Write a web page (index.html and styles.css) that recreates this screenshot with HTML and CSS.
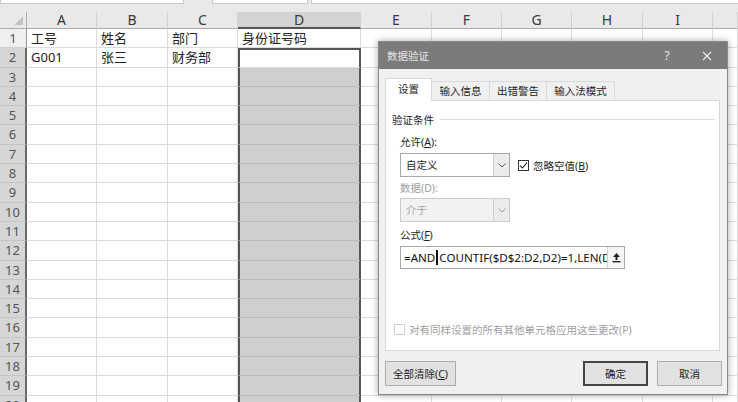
FILE: index.html
```html
<!DOCTYPE html>
<html lang="zh-CN">
<head>
  <meta charset="UTF-8" />
  <title>数据验证</title>
  <link rel="stylesheet" href="styles.css">
</head>
<body>
  <!-- 编辑栏 (只露出底边) -->
  <div class="topbar">
    <div class="box namebox"></div>
    <div class="box fxbtns"></div>
    <div class="box fxbar"></div>
  </div>

  <!-- 工作表 -->
  <div class="sheet">
    <div class="row colhead">
      <div class="corner"></div>
      <div>A</div><div>B</div><div>C</div><div class="sel">D</div><div>E</div><div>F</div><div>G</div><div>H</div><div>I</div><div></div>
    </div>
    <div class="row"><div class="rh">1</div><div>工号</div><div>姓名</div><div>部门</div><div>身份证号码</div><div></div><div></div><div></div><div></div><div></div><div></div></div>
    <div class="row"><div class="rh sel">2</div><div>G001</div><div>张三</div><div>财务部</div><div class="d act"></div><div></div><div></div><div></div><div></div><div></div><div></div></div>
    <div class="row"><div class="rh sel">3</div><div></div><div></div><div></div><div class="d"></div><div></div><div></div><div></div><div></div><div></div><div></div></div>
    <div class="row"><div class="rh sel">4</div><div></div><div></div><div></div><div class="d"></div><div></div><div></div><div></div><div></div><div></div><div></div></div>
    <div class="row"><div class="rh sel">5</div><div></div><div></div><div></div><div class="d"></div><div></div><div></div><div></div><div></div><div></div><div></div></div>
    <div class="row"><div class="rh sel">6</div><div></div><div></div><div></div><div class="d"></div><div></div><div></div><div></div><div></div><div></div><div></div></div>
    <div class="row"><div class="rh sel">7</div><div></div><div></div><div></div><div class="d"></div><div></div><div></div><div></div><div></div><div></div><div></div></div>
    <div class="row"><div class="rh sel">8</div><div></div><div></div><div></div><div class="d"></div><div></div><div></div><div></div><div></div><div></div><div></div></div>
    <div class="row"><div class="rh sel">9</div><div></div><div></div><div></div><div class="d"></div><div></div><div></div><div></div><div></div><div></div><div></div></div>
    <div class="row"><div class="rh sel">10</div><div></div><div></div><div></div><div class="d"></div><div></div><div></div><div></div><div></div><div></div><div></div></div>
    <div class="row"><div class="rh sel">11</div><div></div><div></div><div></div><div class="d"></div><div></div><div></div><div></div><div></div><div></div><div></div></div>
    <div class="row"><div class="rh sel">12</div><div></div><div></div><div></div><div class="d"></div><div></div><div></div><div></div><div></div><div></div><div></div></div>
    <div class="row"><div class="rh sel">13</div><div></div><div></div><div></div><div class="d"></div><div></div><div></div><div></div><div></div><div></div><div></div></div>
    <div class="row"><div class="rh sel">14</div><div></div><div></div><div></div><div class="d"></div><div></div><div></div><div></div><div></div><div></div><div></div></div>
    <div class="row"><div class="rh sel">15</div><div></div><div></div><div></div><div class="d"></div><div></div><div></div><div></div><div></div><div></div><div></div></div>
    <div class="row"><div class="rh sel">16</div><div></div><div></div><div></div><div class="d"></div><div></div><div></div><div></div><div></div><div></div><div></div></div>
    <div class="row"><div class="rh sel">17</div><div></div><div></div><div></div><div class="d"></div><div></div><div></div><div></div><div></div><div></div><div></div></div>
    <div class="row"><div class="rh sel">18</div><div></div><div></div><div></div><div class="d"></div><div></div><div></div><div></div><div></div><div></div><div></div></div>
    <div class="row"><div class="rh sel">19</div><div></div><div></div><div></div><div class="d"></div><div></div><div></div><div></div><div></div><div></div><div></div></div>
    <div class="row"><div class="rh sel">20</div><div></div><div></div><div></div><div class="d"></div><div></div><div></div><div></div><div></div><div></div><div></div></div>
  </div>

  <!-- 数据验证 对话框 -->
  <section class="dlg">
    <header class="dlg-title">
      <span class="t">数据验证</span>
      <span class="help">?</span>
      <span class="close">
        <svg width="10" height="10" viewBox="0 0 10 10"><path d="M1 1L9 9M9 1L1 9" stroke="#ececec" stroke-width="1.2"/></svg>
      </span>
    </header>

    <nav class="tabs">
      <div class="tab on">设置</div>
      <div class="tab w58">输入信息</div>
      <div class="tab w57">出错警告</div>
      <div class="tab w68">输入法模式</div>
    </nav>

    <div class="panel">
      <div class="legend">验证条件</div>

      <div class="field">
        <div class="lbl">允许(<u>A</u>):</div>
        <div class="combo-row">
          <div class="combo">
            <span class="val">自定义</span>
            <span class="drop"><svg width="8" height="5" viewBox="0 0 8 5"><path d="M.5 .5L4 4L7.5 .5" fill="none" stroke="#555"/></svg></span>
          </div>
          <label class="chk-line">
            <span class="chk"><svg width="11" height="11" viewBox="0 0 11 11"><path d="M2 5.6L4.4 8L9 2.6" fill="none" stroke="#222" stroke-width="1.1"/></svg></span>
            <span>忽略空值(<u>B</u>)</span>
          </label>
        </div>

        <div class="lbl off">数据(D):</div>
        <div class="combo-row tight">
          <div class="combo disabled">
            <span class="val">介于</span>
            <span class="drop"><svg width="8" height="5" viewBox="0 0 8 5"><path d="M.5 .5L4 4L7.5 .5" fill="none" stroke="#999"/></svg></span>
          </div>
        </div>

        <div class="lbl gap">公式(<u>F</u>)</div>
        <div class="fbox">
          <div class="ftext">=AND<i class="ibeam"></i>COUNTIF($D$2:D2,D2)=1,LEN(D2)=18)</div>
          <div class="fbtn">
            <svg width="9" height="11" viewBox="0 0 9 11"><path d="M4.5 1L8 5H5.5V8H3.5V5H1Z" fill="#222"/><rect x="0.5" y="9" width="8" height="1.4" fill="#222"/></svg>
          </div>
        </div>
      </div>

      <div class="apply-all">
        <span class="chk off"></span>
        <span>对有同样设置的所有其他单元格应用这些更改(P)</span>
      </div>
    </div>

    <footer class="dlg-foot">
      <button class="btn w71">全部清除(<u>C</u>)</button>
      <button class="btn def">确定</button>
      <button class="btn">取消</button>
    </footer>
  </section>
</body>
</html>
```

FILE: styles.css
```css
/* ─── 0. 리셋 ─────────────────────────────── */
*,*::before,*::after{box-sizing:border-box;margin:0;padding:0}
html,body{
  width:100%;height:100%;overflow:hidden;background:#fff;color:#222;
  font-family:"Noto Sans","Noto Sans CJK SC",sans-serif;
}

/* ─── 1. 编辑栏 ───────────────────────────── */
.topbar{display:flex;height:12px;background:#e9e9e9}
.box{height:4px;background:#fff;border:1px solid #c9c9c9;border-top:none}
.namebox{width:184px}
.fxbtns{width:96px;margin-left:28px}
.fxbar{flex:1;margin-left:3px;border-right:none}

/* ─── 2. 工作表 ───────────────────────────── */
.row{
  display:grid;height:19.3px;
  grid-template-columns:27px 70px 71px 70px 123px 71px 70px 70px 71px 70px 1fr;
}
.row>div{
  border-right:1px solid #dcdcdc;border-bottom:1px solid #dcdcdc;
  padding-left:4px;font-size:13px;line-height:18px;
  white-space:nowrap;overflow:hidden;
}

.colhead{height:17px;background:#e9e9e9}
.colhead>div{
  padding:0;text-align:center;font-size:14px;line-height:16px;color:#3a3a3a;
  border-right-color:#d2d2d2;border-bottom-color:#ababab;overflow:visible;
}
.colhead .sel{background:#d3d3d3;border-bottom:2px solid #555;line-height:15px}
.colhead .corner{
  background:linear-gradient(135deg,transparent 50%,#c2c2c2 50%) no-repeat right 3px bottom 3px/9px 9px;
  border-right-color:#ababab;
}

.row .rh{
  padding:0;text-align:center;color:#555;font-size:13px;
  background:#efefef;border-right-color:#9a9a9a;border-bottom-color:#d0d0d0;
}
.row .rh.sel{background:#d6d6d6;border-right:2px solid #666;border-bottom-color:#c4c4c4}

/* 选中的 D 列 */
.row .d{
  background:#cfcfcf;border-bottom-color:#bcbcbc;
  border-left:2px solid #555;border-right:2px solid #555;
}
.row .d.act{background:#fff;border-top:2px solid #555;border-bottom-color:#dcdcdc}

/* ─── 3. 对话框 ───────────────────────────── */
.dlg{
  position:absolute;left:378px;top:41px;width:350px;height:354px;
  display:flex;flex-direction:column;
  background:#f0f0f0;border:1px solid #8a8a8a;
  box-shadow:0 0 7px rgba(0,0,0,.35);
  font-size:10.5px;color:#1e1e1e;
}
.dlg-title{
  height:27px;flex:none;display:flex;align-items:center;
  background:#7b7b7b;color:#e6e6e6;padding-left:8px;
}
.dlg-title .t{flex:1}
.help,.close{width:40px;text-align:center;font-size:12px}
.close svg{display:block;margin:0 auto}

/* 选项卡 */
.tabs{display:flex;align-items:flex-end;height:22px;margin:9px 0 0 6px}
.tab{
  width:47px;height:19px;line-height:18px;text-align:center;
  background:#f0f0f0;border:1px solid #d9d9d9;border-bottom:none;margin-left:-1px;
}
.tab.on{position:relative;height:23px;margin:0 0 -1px;background:#fff;line-height:21px}
.tab.w58{width:59px}
.tab.w57{width:58px}
.tab.w68{width:69px}

.panel{
  height:251px;margin:0 7px 0 6px;flex:none;
  display:flex;flex-direction:column;
  background:#fff;border:1px solid #d9d9d9;
}
.legend{display:flex;align-items:center;height:14px;margin:11px 4px 0 6px}
.legend::after{content:"";flex:1;border-top:1px solid #dedede;margin-left:6px}

.field{margin-left:14px}
.lbl{height:14px;line-height:14px;margin-top:9px}
.lbl.off{margin-top:4px;color:#a0a0a0}
.lbl.gap{margin-top:6px}
.combo-row{display:flex;align-items:center;margin-top:4px}
.combo-row.tight{margin-top:3px}

.combo{display:flex;width:110px;height:24px;background:#fff;border:1px solid #a8a8a8}
.combo .val{flex:1;padding-left:5px;line-height:22px}
.combo .drop{
  width:16px;display:flex;align-items:center;justify-content:center;
  background:#ececec;border-left:1px solid #d0d0d0;
}
.combo.disabled{background:#f2f2f2;border-color:#cccccc;color:#a6a6a6}

.chk-line{display:flex;align-items:center;gap:4px;margin-left:8px}
.chk{width:11px;height:11px;border:1px solid #333;background:#fff;display:block}
.chk svg{display:block;margin:-1px}
.chk.off{border-color:#cfcfcf}

.fbox{display:flex;width:225px;height:23px;margin-top:4px;background:#fff;border:1px solid #a8a8a8}
.ftext{
  flex:1;overflow:hidden;white-space:nowrap;padding-left:3px;
  font-size:11.6px;line-height:21px;color:#111;
}
.ibeam{display:inline-block;width:2px;height:15px;margin:0 1px;vertical-align:-3px;background:#111}
.fbtn{
  width:17px;display:flex;align-items:center;justify-content:center;
  background:#f5f5f5;border-left:1px solid #cfcfcf;
}

.apply-all{
  margin-top:auto;margin-bottom:13px;margin-left:8px;
  display:flex;align-items:center;gap:4px;color:#a0a0a0;
}

/* 按钮 */
.dlg-foot{display:flex;gap:9px;padding:10px 5px 0 6px}
.btn{
  width:65px;height:25px;font:inherit;color:#1e1e1e;
  background:#e1e1e1;border:1px solid #adadad;
}
.btn.w71{width:71px}
.btn.def{margin-left:auto;border:2px solid #444}
```
